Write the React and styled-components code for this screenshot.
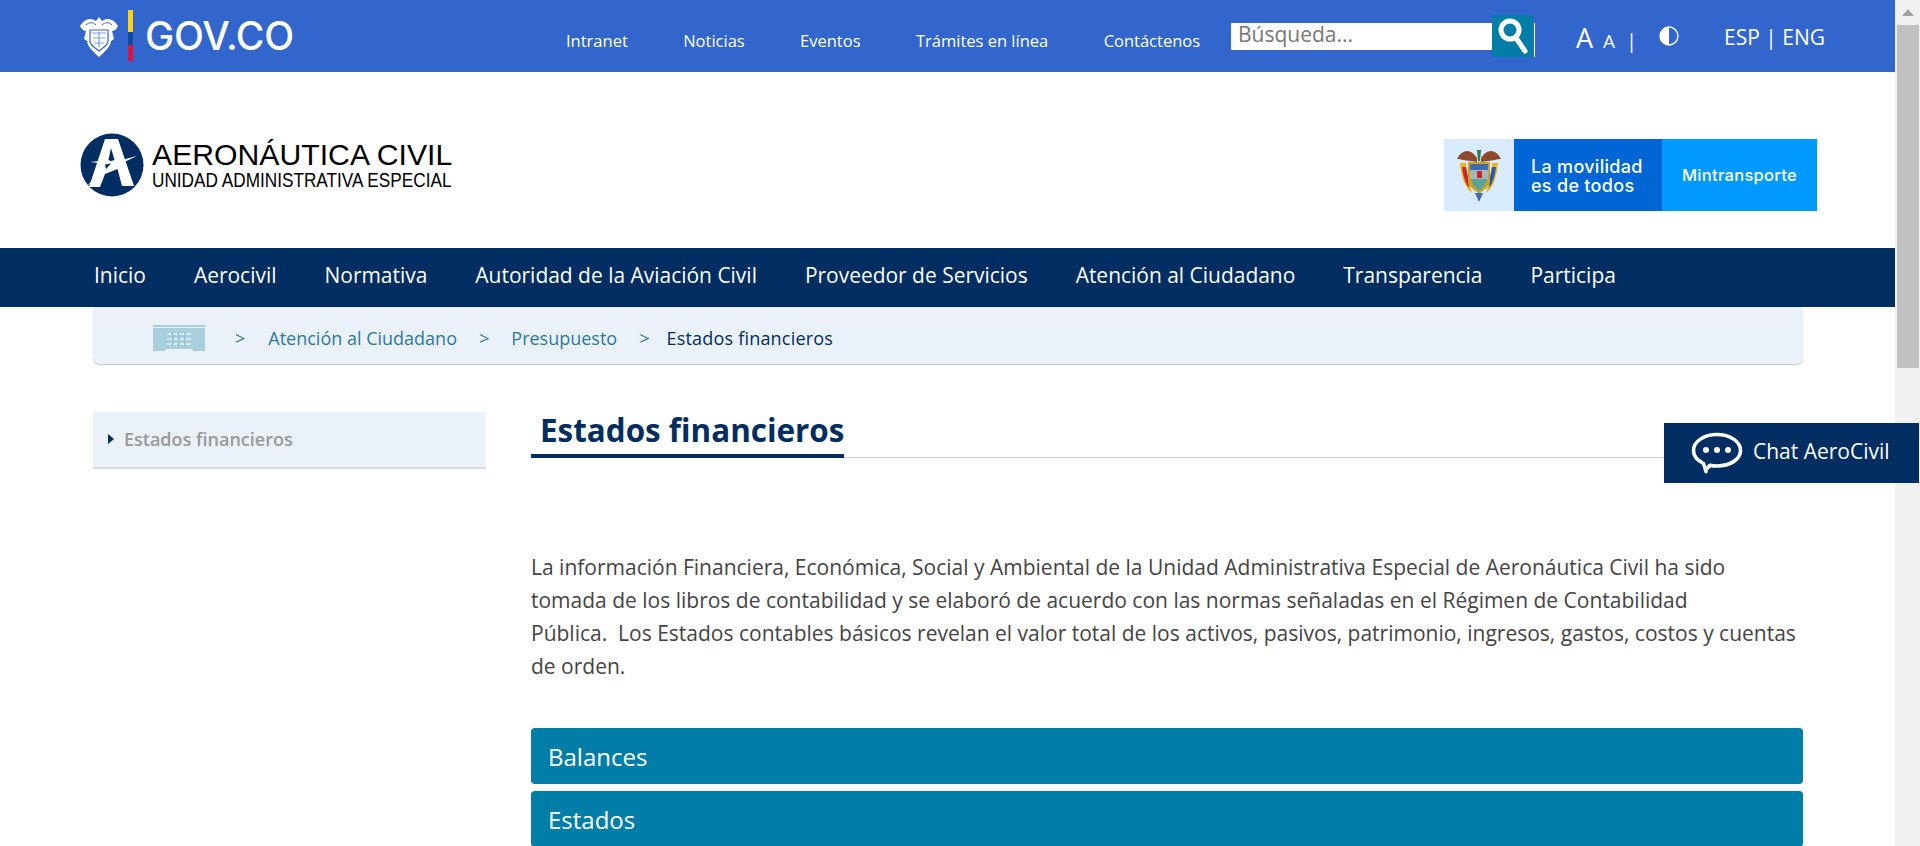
import React from "react";
import styled, { createGlobalStyle } from "styled-components";

const navy = "#002d62";
const teal = "#007ea8";
const pale = "#eaf1f9";

const GlobalStyle = createGlobalStyle`
  html, body {
    margin: 0;
    padding: 0;
    height: 100%;
    overflow: hidden;
    background: #fff;
    font-family: "Open Sans", "Liberation Sans", sans-serif;
  }
  * { box-sizing: border-box; }
`;

const topLinks = ["Intranet", "Noticias", "Eventos", "Trámites en línea", "Contáctenos"];
const mainLinks = [
  "Inicio",
  "Aerocivil",
  "Normativa",
  "Autoridad de la Aviación Civil",
  "Proveedor de Servicios",
  "Atención al Ciudadano",
  "Transparencia",
  "Participa",
];

const GovCrest = () => (
  <svg width="38" height="42" viewBox="0 0 38 42">
    <path d="M0 11 C4 4 11 2 16 6 L19 2 L22 6 C27 2 34 4 38 11 C36 15 34 16 32 16 L34 24 L31 26 C30 33 24 37 19 42 C14 37 8 33 7 26 L4 24 L6 16 C4 16 2 15 0 11Z" fill="#fff" />
    <path d="M10 15 H28 V26 C28 31 22 33 19 36 C16 33 10 31 10 26Z" fill="none" stroke="#3366cc" strokeWidth="1.2" />
    <path d="M12 18 H26 M19 17 V32 M13 23 H25 M14 28 H24" stroke="#7f9fe0" strokeWidth="1.2" />
    <path d="M6 10 C9 7 13 7 16 10 M32 10 C29 7 25 7 22 10" fill="none" stroke="#3366cc" strokeWidth="1" />
  </svg>
);

const AeroLogo = () => (
  <svg width="64" height="64" viewBox="0 0 64 64">
    <circle cx="32" cy="32" r="31.5" fill={navy} />
    <path d="M25 6 H38 L54 53 H42 L37.5 36 L25 41 L20 54 H9 Z" fill="#fff" />
    <path d="M31 15 L34.5 27 L28 29 Z" fill={navy} />
    <path d="M10 29 L28 27 L34 29 L57 23 L36 33 L26 40 L7 53 L24 35 L29 31 Z" fill="#fff" />
    <path d="M25 31.5 L31 30.5 L26 36 Z" fill={navy} />
  </svg>
);

const ColombiaCrest = () => (
  <svg width="46" height="56" viewBox="0 0 46 56">
    <path d="M1 12 C6 2 15 1 21 11 L21 15 L7 13 C5 12 3 12 1 12Z" fill="#8f4a2c" />
    <path d="M45 12 C40 2 31 1 25 11 L25 15 L39 13 C41 12 43 12 45 12Z" fill="#8f4a2c" />
    <path d="M21 3 L25 3 L24 14 H22Z" fill="#2f7d4f" />
    <path d="M4 16 C5 28 8 40 16 46 L13 34 C11 28 10 22 10 16Z" fill="#f1b31c" />
    <path d="M42 16 C41 28 38 40 30 46 L33 34 C35 28 36 22 36 16Z" fill="#f1b31c" />
    <path d="M6 20 C7 28 9 36 13 41 L12 30 L10 20Z" fill="#c8242f" />
    <path d="M40 20 C39 28 37 36 33 41 L34 30 L36 20Z" fill="#2a5aa8" />
    <path d="M12 15 H34 V33 C34 40 27 43 23 47 C19 43 12 40 12 33Z" fill="#c9a227" />
    <rect x="14" y="17" width="18" height="6" fill="#3d6cb0" />
    <path d="M14 23 H32 V32 H14Z" fill="#a8b6b8" />
    <rect x="21" y="24" width="5" height="7" fill="#c8242f" />
    <path d="M15 32 H31 C30 38 26 41 23 44 C20 41 16 38 15 32Z" fill="#5aa49a" />
    <path d="M19 46 L27 46 L23 55Z" fill="#3d6cb0" />
  </svg>
);

const BuildingIcon = () => (
  <svg width="52" height="26" viewBox="0 0 52 26">
    <rect width="52" height="2" fill="#a8d0dc" />
    <rect y="3" width="52" height="21" fill="#a8d0dc" />
    <path d="M0 25 H11 V22 H41 V25 H52" fill="none" stroke="#a8d0dc" strokeWidth="2" />
    {[8, 13, 18].map((y) => (
      <rect key={y} x="14" y={y} width="24" height="2" fill="#d6e9ef" />
    ))}
    {[19, 25, 31].map((x) => (
      <rect key={x} x={x} y="7" width="1.5" height="14" fill="#8fc1d0" />
    ))}
  </svg>
);

const SearchIcon = () => (
  <svg width="30" height="36" viewBox="0 0 30 36">
    <circle cx="12" cy="12" r="9" fill="none" stroke="#fff" strokeWidth="5" />
    <path d="M18 20 L27 33" stroke="#fff" strokeWidth="5" strokeLinecap="round" />
  </svg>
);

const ContrastIcon = () => (
  <svg width="20" height="20" viewBox="0 0 20 20">
    <circle cx="10" cy="10" r="9" fill="#3366cc" stroke="#fff" strokeWidth="1.4" />
    <path d="M10 1 A9 9 0 0 0 10 19Z" fill="#fff" />
  </svg>
);

const ChatIcon = () => (
  <svg width="52" height="42" viewBox="0 0 52 42">
    <path d="M26 2.5 C39 2.5 49.5 9.5 49.5 18.5 C49.5 27.5 39 34 26 34 C23.5 34 21 33.8 19 33.2 C17 35.5 14 38 15 39.5 C14 36 13 33 12.5 31.5 C6.5 28.5 2.5 24 2.5 18.5 C2.5 9.5 13 2.5 26 2.5Z" fill="none" stroke="#fff" strokeWidth="3.6" strokeLinejoin="round" />
    <circle cx="15" cy="18" r="3" fill="#fff" />
    <circle cx="26" cy="18" r="3" fill="#fff" />
    <circle cx="37" cy="18" r="3" fill="#fff" />
  </svg>
);

const Shell = styled.div`
  display: flex;
  width: 1920px;
  height: 846px;
  overflow: hidden;
`;

const Page = styled.div`
  width: 1895px;
  flex: none;
`;

const ScrollTrack = styled.div`
  flex: 1;
  background: #f1f1f1;
  display: flex;
  flex-direction: column;
  align-items: center;
`;

const ScrollArrow = styled.div`
  width: 0;
  height: 0;
  margin: 9px 0 9px;
  border-left: 6px solid transparent;
  border-right: 6px solid transparent;
  border-bottom: 7px solid #a3a3a3;
`;

const ScrollThumb = styled.div`
  width: 22px;
  height: 343px;
  margin-left: 1px;
  background: #c1c1c1;
`;

const TopBar = styled.div`
  height: 72px;
  background: #3366cc;
  display: flex;
  align-items: center;
  padding-left: 80px;
  color: #fff;
`;

const GovLogo = styled.div`
  display: flex;
  align-items: center;
  width: 486px;
`;

const FlagStripe = styled.div`
  width: 5px;
  height: 51px;
  margin: -2px 12px 0 10px;
  background: linear-gradient(#fcd116 0 43%, #0f4a9c 43% 68%, #e0123f 68%);
`;

const GovText = styled.span`
  font-family: "Inter", "Liberation Sans", sans-serif;
  font-size: 39px;
  font-weight: 500;
  letter-spacing: -0.2px;
  line-height: 1;
  margin-top: -2px;
`;

const TopLinks = styled.nav`
  display: flex;
  gap: 55.4px;
  width: 665px;
  padding-top: 9px;
`;

const TopLink = styled.a`
  font-size: 16.5px;
  color: #fff;
  white-space: nowrap;
`;

const SearchBox = styled.div`
  display: flex;
  align-items: center;
  width: 304px;
`;

const SearchInput = styled.div`
  width: 261px;
  height: 27px;
  background: #fff;
  color: #777;
  font-size: 21px;
  line-height: 22px;
  padding-left: 7px;
`;

const SearchButton = styled.div`
  width: 41px;
  height: 42px;
  background: ${teal};
  display: flex;
  align-items: center;
  justify-content: center;
  margin-right: 1px;
`;

const SearchRule = styled.div`
  width: 1px;
  height: 34px;
  background: #fff;
  margin-top: 8px;
`;

const FontTools = styled.div`
  display: flex;
  align-items: baseline;
  width: 83px;
  margin-left: 41px;
  padding-top: 2px;
`;

const FontLetter = styled.span`
  font-size: ${(p) => p.$size}px;
  margin-right: ${(p) => p.$gap}px;
`;

const ContrastSlot = styled.div`
  display: flex;
  width: 65px;
`;

const Lang = styled.div`
  font-size: 21px;
  padding-top: 1px;
`;

const Header = styled.header`
  height: 176px;
  display: flex;
  align-items: center;
  justify-content: space-between;
  padding: 0 78px 0 80px;
`;

const BrandRow = styled.div`
  display: flex;
  align-items: center;
  gap: 8px;
  margin-top: 10px;
`;

const BrandText = styled.div`
  font-family: "Liberation Sans", Arial, sans-serif;
  color: #000;
`;

const BrandName = styled.div`
  font-size: 30.2px;
  line-height: 30px;
`;

const BrandSub = styled.div`
  font-size: 19.5px;
  line-height: 19px;
  margin-top: 1px;
  white-space: nowrap;
  transform: scaleX(0.882);
  transform-origin: left center;
`;

const Banner = styled.div`
  display: flex;
  height: 72px;
  width: 373px;
  margin-top: 30px;
`;

const BannerCrest = styled.div`
  width: 70px;
  background: #d9ebff;
  display: flex;
  align-items: center;
  justify-content: center;
`;

const BannerMid = styled.div`
  width: 148px;
  background: #0066d6;
  color: #fff;
  font-family: "Inter", "Open Sans", sans-serif;
  font-size: 18px;
  font-weight: 500;
  letter-spacing: 0.3px;
  line-height: 19px;
  padding: 18px 0 0 17px;
  white-space: nowrap;
`;

const BannerEnd = styled.div`
  flex: 1;
  background: #0099ff;
  color: #fff;
  font-family: "Inter", "Open Sans", sans-serif;
  font-size: 16.5px;
  font-weight: 500;
  letter-spacing: 0.3px;
  display: flex;
  align-items: center;
  justify-content: center;
`;

const MainNav = styled.nav`
  height: 59px;
  background: ${navy};
  display: flex;
  align-items: center;
  gap: 48px;
  padding: 0 0 6px 94px;
`;

const MainLink = styled.a`
  color: #fff;
  font-size: 20.96px;
  white-space: nowrap;
`;

const Body = styled.div`
  padding: 0 92px 0 93px;
`;

const Breadcrumb = styled.div`
  height: 57px;
  background: ${pale};
  border-radius: 0 0 6px 6px;
  box-shadow: 0 1px 1px #c4c4c4;
  display: flex;
  align-items: center;
  padding: 4px 0 0 60px;
  font-size: 18px;
`;

const Crumb = styled.a`
  color: ${(p) => (p.$current ? navy : "#2a7a9e")};
  font-weight: ${(p) => (p.$current ? 500 : 400)};
  letter-spacing: ${(p) => (p.$current ? "0.2px" : "0")};
`;

const Sep = styled.span`
  color: #2a7a9e;
  margin: 0 ${(p) => p.$right || 22}px 0 ${(p) => p.$left || 22}px;
`;

const Columns = styled.div`
  display: flex;
  gap: 45px;
  padding-top: 48px;
`;

const Sidebar = styled.aside`
  width: 393px;
  flex: none;
`;

const SideItem = styled.div`
  height: 57px;
  background: ${pale};
  border-bottom: 2px solid #dddddd;
  display: flex;
  align-items: center;
  padding: 0 0 2px 15px;
  color: #999;
  font-size: 18px;
  font-weight: 600;
`;

const SideArrow = styled.span`
  width: 0;
  height: 0;
  margin-right: 10px;
  border-top: 5.5px solid transparent;
  border-bottom: 5.5px solid transparent;
  border-left: 6px solid ${navy};
`;

const Content = styled.main`
  flex: 1;
`;

const TitleRow = styled.div`
  border-bottom: 1px solid #cccccc;
  height: 51px;
  margin-top: -5px;
`;

const Title = styled.h1`
  display: inline-block;
  margin: 0;
  height: 51px;
  padding: 0 0 0 9px;
  border-bottom: 4px solid ${navy};
  color: ${navy};
  font-size: 31.4px;
  font-weight: 700;
  line-height: 45px;
  white-space: nowrap;
`;

const Paragraph = styled.p`
  margin: 93px 0 0;
  color: #444;
  font-size: 21px;
  line-height: 33.1px;
  white-space: nowrap;
`;

const Accordion = styled.div`
  display: flex;
  flex-direction: column;
  gap: 7px;
  margin-top: 45px;
`;

const AccordionHead = styled.div`
  height: 56px;
  background: ${teal};
  border-radius: 4px;
  color: #fff;
  font-size: 24px;
  display: flex;
  align-items: center;
  padding-left: 17px;
`;

const ChatButton = styled.div`
  position: fixed;
  top: 423px;
  right: 1px;
  width: 255px;
  height: 60px;
  background: ${navy};
  color: #fff;
  display: flex;
  align-items: center;
  padding: 0 0 0 27px;
  gap: 10px;
  font-size: 21px;
`;

const ChatLabel = styled.span`
  margin-top: -4px;
`;

export default function App() {
  return (
    <Shell>
      <GlobalStyle />
      <Page>
        <TopBar>
          <GovLogo>
            <GovCrest />
            <FlagStripe />
            <GovText>GOV.CO</GovText>
          </GovLogo>
          <TopLinks>
            {topLinks.map((link) => (
              <TopLink key={link}>{link}</TopLink>
            ))}
          </TopLinks>
          <SearchBox>
            <SearchInput>Búsqueda...</SearchInput>
            <SearchButton>
              <SearchIcon />
            </SearchButton>
            <SearchRule />
          </SearchBox>
          <FontTools>
            <FontLetter $size={27} $gap={10}>A</FontLetter>
            <FontLetter $size={19} $gap={11}>A</FontLetter>
            <FontLetter $size={20} $gap={0}>|</FontLetter>
          </FontTools>
          <ContrastSlot>
            <ContrastIcon />
          </ContrastSlot>
          <Lang>ESP | ENG</Lang>
        </TopBar>
        <Header>
          <BrandRow>
            <AeroLogo />
            <BrandText>
              <BrandName>AERONÁUTICA CIVIL</BrandName>
              <BrandSub>UNIDAD ADMINISTRATIVA ESPECIAL</BrandSub>
            </BrandText>
          </BrandRow>
          <Banner>
            <BannerCrest>
              <ColombiaCrest />
            </BannerCrest>
            <BannerMid>
              La movilidad
              <br />
              es de todos
            </BannerMid>
            <BannerEnd>Mintransporte</BannerEnd>
          </Banner>
        </Header>
        <MainNav>
          {mainLinks.map((link) => (
            <MainLink key={link}>{link}</MainLink>
          ))}
        </MainNav>
        <Body>
          <Breadcrumb>
            <BuildingIcon />
            <Sep $left={30} $right={23}>&gt;</Sep>
            <Crumb>Atención al Ciudadano</Crumb>
            <Sep>&gt;</Sep>
            <Crumb>Presupuesto</Crumb>
            <Sep $right={17}>&gt;</Sep>
            <Crumb $current>Estados financieros</Crumb>
          </Breadcrumb>
          <Columns>
            <Sidebar>
              <SideItem>
                <SideArrow />
                Estados financieros
              </SideItem>
            </Sidebar>
            <Content>
              <TitleRow>
                <Title>Estados financieros</Title>
              </TitleRow>
              <Paragraph>
                La información Financiera, Económica, Social y Ambiental de la Unidad Administrativa Especial de Aeronáutica Civil ha sido
                <br />
                tomada de los libros de contabilidad y se elaboró de acuerdo con las normas señaladas en el Régimen de Contabilidad
                <br />
                Pública.&nbsp; Los Estados contables básicos revelan el valor total de los activos, pasivos, patrimonio, ingresos, gastos, costos y cuentas
                <br />
                de orden.
              </Paragraph>
              <Accordion>
                <AccordionHead>Balances</AccordionHead>
                <AccordionHead>Estados</AccordionHead>
              </Accordion>
            </Content>
          </Columns>
        </Body>
      </Page>
      <ScrollTrack>
        <ScrollArrow />
        <ScrollThumb />
      </ScrollTrack>
      <ChatButton>
        <ChatIcon />
        <ChatLabel>Chat AeroCivil</ChatLabel>
      </ChatButton>
    </Shell>
  );
}
